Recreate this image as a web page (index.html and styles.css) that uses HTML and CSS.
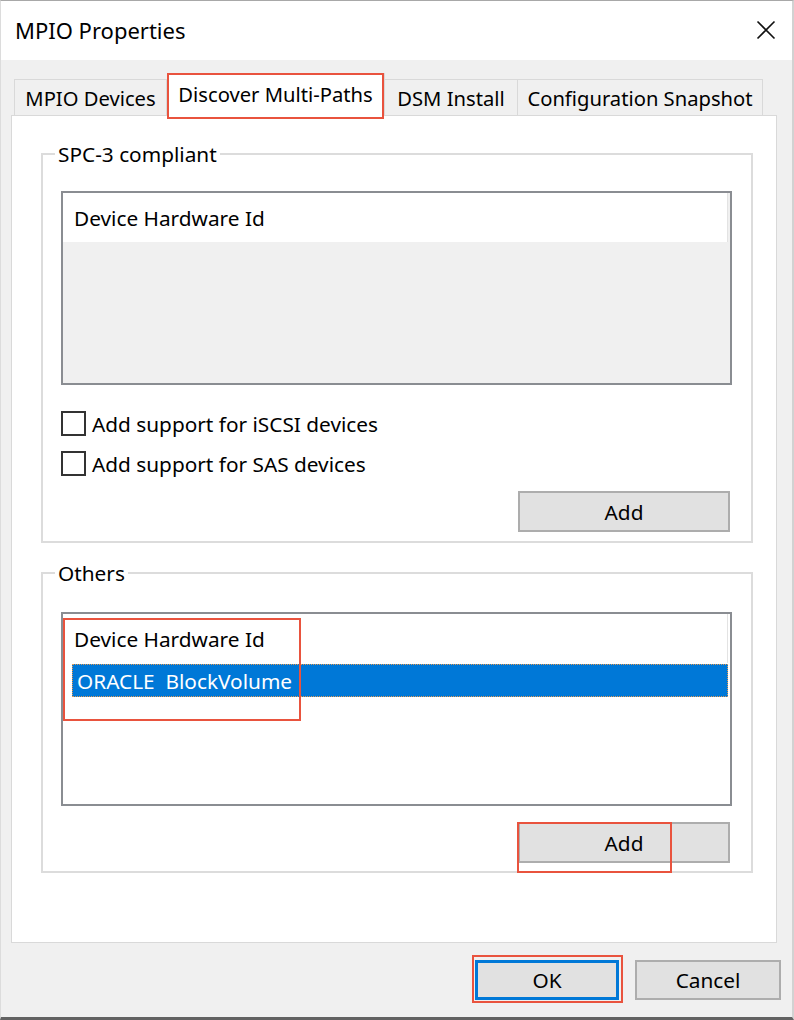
FILE: index.html
```html
<!DOCTYPE html>
<html lang="en">
<head>
<meta charset="utf-8">
<title>MPIO Properties</title>
<link rel="stylesheet" href="styles.css">
</head>
<body>
<div class="window">
  <div class="titlebar">
    <span class="title">MPIO Properties</span>
    <svg class="close" width="20" height="20" viewBox="0 0 20 20" aria-hidden="true">
      <path d="M1.5 1.5 L18.5 18.5 M18.5 1.5 L1.5 18.5" stroke="#111" stroke-width="1.6" fill="none"/>
    </svg>
  </div>
  <div class="tabs">
    <div class="tab tab-mpio">MPIO Devices</div>
    <div class="tab tab-active">Discover Multi-Paths</div>
    <div class="tab tab-dsm">DSM Install</div>
    <div class="tab tab-config">Configuration Snapshot</div>
  </div>
  <div class="panel">
    <fieldset class="group group-spc">
      <legend>SPC-3 compliant</legend>
      <div class="listbox listbox-disabled">
        <div class="lv-header">Device Hardware Id</div>
      </div>
      <label class="check check-first"><span class="box"></span>Add support for iSCSI devices</label>
      <label class="check"><span class="box"></span>Add support for SAS devices</label>
      <div class="btn-row btn-row-spc"><button class="btn btn-add">Add</button></div>
    </fieldset>
    <fieldset class="group group-others">
      <legend>Others</legend>
      <div class="listbox listbox-others">
        <div class="lv-header">Device Hardware Id</div>
        <div class="lv-row selected">ORACLE&nbsp; BlockVolume</div>
        <div class="annot annot-list"></div>
      </div>
      <div class="btn-row btn-row-others"><button class="btn btn-add btn-add-marked">Add</button></div>
    </fieldset>
  </div>
  <div class="footer">
    <button class="btn btn-footer btn-default">OK</button>
    <button class="btn btn-footer btn-cancel">Cancel</button>
  </div>
</div>
</body>
</html>
```

FILE: styles.css
```css
* {
  box-sizing: border-box;
}

html, body {
  margin: 0;
  padding: 0;
  background: #f0f0f0;
}

body {
  font-family: "Noto Sans", "Open Sans", sans-serif;
  font-size: 20.8px;
  color: #000;
}

.window {
  width: 794px;
  height: 1020px;
  background: #f0f0f0;
  border-top: 1px solid #a8a8a8;
  border-left: 1px solid #dcdcdc;
  border-right: 2px solid #d2d2d2;
  border-bottom: 3px solid #626262;
  display: flex;
  flex-direction: column;
}

/* Title bar */
.titlebar {
  height: 59px;
  background: #fff;
  display: flex;
  align-items: center;
  justify-content: space-between;
  padding: 0 16px 2px 14px;
  flex: none;
}

.title {
  font-size: 22px;
  line-height: 28px;
}

.close {
  display: block;
}

/* Tabs */
.tabs {
  display: flex;
  align-items: flex-end;
  height: 43px;
  margin-top: 13px;
  margin-bottom: -1px;
  padding-left: 13px;
  position: relative;
  z-index: 2;
  flex: none;
}

.tab {
  height: 36px;
  margin-bottom: 1px;
  border: 1px solid #d9d9d9;
  border-bottom: none;
  background: #f0f0f0;
  display: flex;
  align-items: center;
  justify-content: center;
  font-size: 20.2px;
  white-space: nowrap;
  padding-top: 1px;
}

.tab-mpio { width: 153px; }
.tab-dsm { width: 133px; border-left: none; }
.tab-config { width: 245px; border-left: none; }

.tab-active {
  width: 218px;
  height: 43px;
  margin-bottom: 0;
  background: #fff;
  position: relative;
  border-left: none;
  padding-top: 0;
  padding-bottom: 2px;
}

.tab-active::after {
  content: "";
  position: absolute;
  top: -1px;
  left: 0;
  right: 0;
  bottom: -3px;
  border: 2px solid #e9533e;
}

/* Panel */
.panel {
  margin-left: 10px;
  width: 766px;
  height: 828px;
  background: #fff;
  border: 1px solid #d9d9d9;
  flex: none;
  position: relative;
  z-index: 1;
}

.group {
  margin: 0 0 0 29px;
  width: 712px;
  padding: 0;
  border: 2px solid #dcdcdc;
  min-width: 0;
}

.group legend {
  margin-left: 12px;
  padding: 0 3px;
  font-size: 20.8px;
  line-height: 26px;
}

.group-spc {
  margin-top: 25px;
  padding-bottom: 9px;
}

.group-others {
  margin-top: 17px;
  padding-bottom: 8px;
}

/* List boxes */
.listbox {
  margin-left: 18px;
  width: 671px;
  height: 194px;
  border: 2px solid #8a8d92;
  position: relative;
}

.listbox-disabled {
  margin-top: 24px;
  background: #f0f0f0;
}

.listbox-others {
  margin-top: 26px;
  background: #fff;
}

.lv-header {
  width: 665px;
  height: 49px;
  background: #fff;
  border-right: 1px solid #e3e3e3;
  display: flex;
  align-items: center;
  padding-left: 11px;
  font-size: 20.8px;
  white-space: nowrap;
}

.lv-row {
  margin-left: 9px;
  width: 656px;
  height: 33px;
  margin-top: 1px;
  display: flex;
  align-items: center;
  padding-left: 4px;
  font-size: 20.8px;
  white-space: pre;
}

.lv-row.selected {
  background: #0078d7;
  color: #fff;
  border: 1px dotted #e39a52;
}

.annot {
  position: absolute;
  border: 2px solid #e9533e;
  pointer-events: none;
}

.annot-list {
  left: 0;
  top: 4px;
  width: 238px;
  height: 103px;
}

/* Checkboxes */
.check {
  display: flex;
  align-items: center;
  margin-left: 18px;
  height: 25px;
  margin-top: 15px;
  font-size: 20.8px;
  white-space: nowrap;
}

.check-first {
  margin-top: 26px;
}

.check .box {
  width: 25px;
  height: 25px;
  border: 2px solid #333;
  background: #fff;
  margin-right: 6px;
  flex: none;
}

/* Buttons */
.btn-row {
  display: flex;
  justify-content: flex-end;
  padding-right: 21px;
}

.btn-row-spc {
  margin-top: 15px;
}

.btn-row-others {
  margin-top: 16px;
}

.btn {
  font-family: "Noto Sans", "Open Sans", sans-serif;
  font-size: 20.8px;
  color: #000;
  background: #e1e1e1;
  border: 2px solid #adadad;
  padding: 0;
  margin: 0;
  display: flex;
  align-items: center;
  justify-content: center;
  position: relative;
}

.btn-add {
  width: 212px;
  height: 41px;
}

.btn-add-marked::after {
  content: "";
  position: absolute;
  left: -3px;
  top: -2px;
  width: 151px;
  height: 47px;
  border: 2px solid #e9533e;
}

.footer {
  display: flex;
  justify-content: flex-end;
  gap: 16px;
  margin-top: 17px;
  padding-right: 11px;
  flex: none;
}

.btn-footer {
  height: 40px;
}

.btn-default {
  width: 144px;
  border: 2px solid #0078d7;
  box-shadow: inset 0 0 0 1px #0078d7;
}

.btn-default::after {
  content: "";
  position: absolute;
  left: -5px;
  top: -7px;
  right: -6px;
  bottom: -5px;
  border: 2px solid #e9533e;
}

.btn-cancel {
  width: 146px;
}
```
